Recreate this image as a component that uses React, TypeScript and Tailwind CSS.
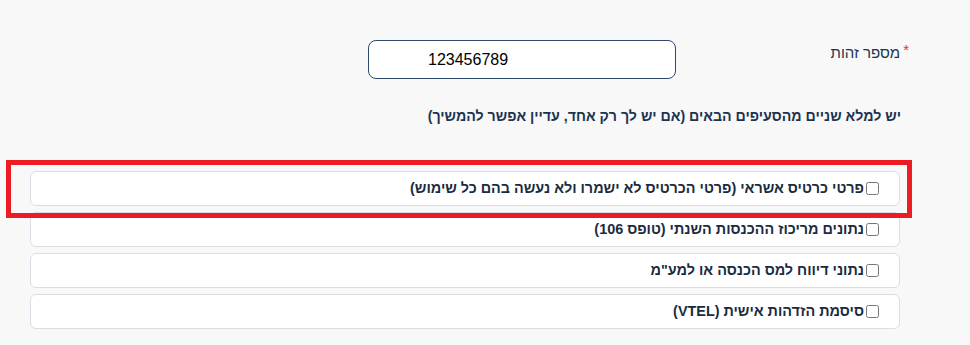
import React from 'react';

const options = [
  'פרטי כרטיס אשראי (פרטי הכרטיס לא ישמרו ולא נעשה בהם כל שימוש)',
  'נתונים מריכוז ההכנסות השנתי (טופס 106)',
  'נתוני דיווח למס הכנסה או למע"מ',
  'סיסמת הזדהות אישית (VTEL)',
];

export default function App() {
  return (
    <div
      dir="rtl"
      className="relative min-h-[345px] w-full bg-[#f8f8f8] font-['Liberation_Sans',Arial,sans-serif] text-[#1c3350]"
    >
      <div className="pr-[61px] pt-[40px]">
        <div className="flex items-start">
          <label className="w-[233px] pt-[3px] text-[15px] leading-[20px]">
            <span className="relative top-[-3px] ml-[3px] text-[#e8322a]">*</span>
            מספר זהות
          </label>
          <div
            dir="ltr"
            className="flex h-[39px] w-[308px] items-center rounded-[8px] border border-[#2e4a6b] bg-white pl-[59px] text-[16px] text-black"
          >
            123456789
          </div>
        </div>

        <p className="mr-[8px] mt-[27px] text-[14.2px] font-semibold leading-[20px] text-[#1c3350]">
          יש למלא שניים מהסעיפים הבאים (אם יש לך רק אחד, עדיין אפשר להמשיך)
        </p>
      </div>

      <div className="ml-[30px] mr-[70px] mt-[45px] flex flex-col gap-[6px]">
        {options.map((opt) => (
          <label
            key={opt}
            className="flex h-[35px] items-center rounded-[6px] border border-[#d8dde6] bg-white pr-[20px] text-[14.4px] font-semibold text-[#1a2b40]"
          >
            <input type="checkbox" className="ml-[2px] h-[13px] w-[13px] accent-[#4a4a4a]" />
            <span>{opt}</span>
          </label>
        ))}
      </div>

      {/* red highlight around first option */}
      <div className="pointer-events-none absolute left-[6px] top-[160px] h-[58px] w-[906px] border-[5px] border-[#ec1c24]" />
    </div>
  );
}
